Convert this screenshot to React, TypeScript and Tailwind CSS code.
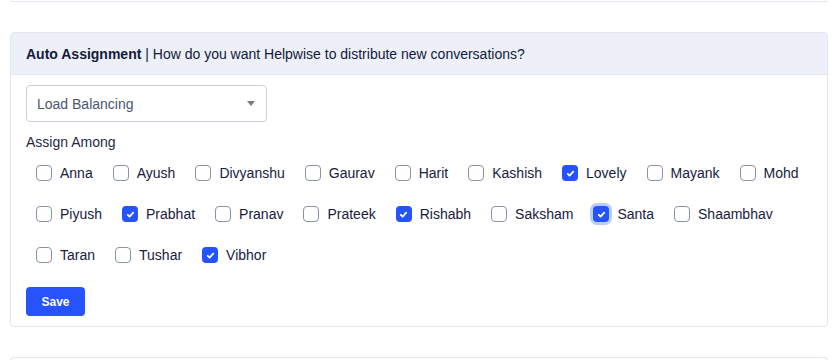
type Agent = { name: string; checked?: boolean; focused?: boolean };

const agents: Agent[] = [
  { name: "Anna" },
  { name: "Ayush" },
  { name: "Divyanshu" },
  { name: "Gaurav" },
  { name: "Harit" },
  { name: "Kashish" },
  { name: "Lovely", checked: true },
  { name: "Mayank" },
  { name: "Mohd" },
  { name: "Piyush" },
  { name: "Prabhat", checked: true },
  { name: "Pranav" },
  { name: "Prateek" },
  { name: "Rishabh", checked: true },
  { name: "Saksham" },
  { name: "Santa", checked: true, focused: true },
  { name: "Shaambhav" },
  { name: "Taran" },
  { name: "Tushar" },
  { name: "Vibhor", checked: true },
];

function Checkbox({ checked, focused }: { checked?: boolean; focused?: boolean }) {
  if (checked) {
    return (
      <span
        className={`w-4 h-4 rounded-[4px] bg-[#2453ff] flex items-center justify-center shrink-0 ${
          focused ? "ring-[3px] ring-[#b9cffb]" : ""
        }`}
      >
        <svg className="w-[9px] h-[9px]" viewBox="0 0 10 10" fill="none" stroke="white" strokeWidth={2} strokeLinecap="round" strokeLinejoin="round">
          <path d="M2 5.3l2 2 4-4.3" />
        </svg>
      </span>
    );
  }
  return <span className="w-4 h-4 rounded-[4px] border border-[#8b93a8] bg-white shrink-0" />;
}

export default function App() {
  return (
    <div className="bg-white h-[360px] overflow-hidden px-[10px] [font-family:'Liberation_Sans',Arial,sans-serif] text-sm text-[#18203d]">
      <div className="w-[818px] h-[2px] border-x border-b border-[#e3e6f0] rounded-b-[4px]" />

      <div className="w-[818px] mt-[30px] border border-[#e3e6f0] rounded-[4px]">
        <div className="h-[42px] bg-[#edf0f8] border-b border-[#e3e6f0] px-[15px] flex items-center text-[#121a3a]">
          <span className="font-bold">Auto Assignment</span>
          <span>&nbsp;| How do you want Helpwise to distribute new conversations?</span>
        </div>

        <div className="px-[15px] pt-[10px] pb-[10px]">
          <div className="w-[241px] h-[37px] border border-[#c9d0de] rounded-[4px] flex items-center justify-between pl-[10px] pr-[11px] text-[#4b5570]">
            <span>Load Balancing</span>
            <svg className="w-2 h-[5px]" viewBox="0 0 8 5" fill="#7a7a7a">
              <path d="M0 0h8L4 5z" />
            </svg>
          </div>

          <div className="mt-[10px] leading-5 text-[#1f2944]">Assign Among</div>

          <div className="mt-[11px] pl-[10px] flex flex-wrap gap-x-5 gap-y-[21px]">
            {agents.map((a) => (
              <label key={a.name} className="flex items-center gap-2 h-5 leading-5">
                <Checkbox checked={a.checked} focused={a.focused} />
                <span>{a.name}</span>
              </label>
            ))}
          </div>

          <button className="mt-[22px] w-[59px] h-[29px] rounded-[4px] bg-[#2653ff] text-white text-xs font-bold">
            Save
          </button>
        </div>
      </div>

      <div className="w-[818px] mt-[30px] h-[10px] border-x border-t border-[#e3e6f0] rounded-t-[4px]" />
    </div>
  );
}
